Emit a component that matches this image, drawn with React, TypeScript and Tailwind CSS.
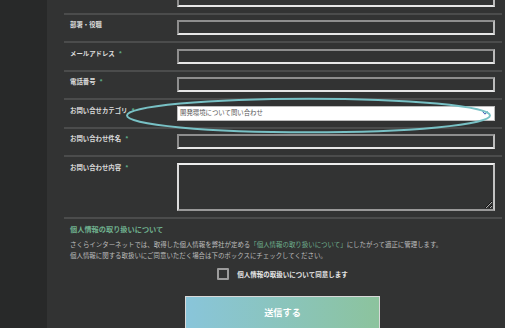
import type { ReactNode } from "react";

const FONT = { fontFamily: '"Noto Sans CJK JP", "Noto Sans", sans-serif' };

function Row({
  label,
  required,
  children,
  first,
}: {
  label?: string;
  required?: boolean;
  children: ReactNode;
  first?: boolean;
}) {
  return (
    <div
      className={
        first
          ? "flex -mt-[14px] pt-[5.5px] pb-[6px] pl-[6px] pr-[7px]"
          : "flex border-t-2 border-[#4b4c4c] pt-[5.5px] pb-[6px] pl-[6px] pr-[7px]"
      }
    >
      <div className="w-[107px] shrink-0 text-[6.4px] leading-[9px] font-bold text-[#dcdcdc]">
        {label}
        {required && <span className="ml-[4px] text-[#5fae8a]">*</span>}
      </div>
      <div className="flex-1">{children}</div>
    </div>
  );
}

function TextInput() {
  return (
    <div className="h-[15px] border-2 border-t-[#8e8e8e] border-l-[#8e8e8e] border-b-[#e6e6e6] border-r-[#bcbcbc]" />
  );
}

export default function App() {
  return (
    <div className="relative flex h-[328px] w-[505px] overflow-hidden bg-[#323333]" style={FONT}>
      {/* Sidebar */}
      <div className="w-[47px] shrink-0 bg-[#282929]" />

      {/* Form */}
      <div className="flex-1 pl-[17px] pr-[3px]">
        <Row first>
          <TextInput />
        </Row>
        <Row label="部署・役職">
          <TextInput />
        </Row>
        <Row label="メールアドレス" required>
          <TextInput />
        </Row>
        <Row label="電話番号" required>
          <TextInput />
        </Row>
        <Row label="お問い合せカテゴリ" required>
          <div className="flex h-[15px] items-center justify-between border border-[#bdbdbd] bg-white pl-[2px] pr-[6px] text-[6.4px] text-[#555]">
            <span>開発環境について問い合わせ</span>
            <svg width="6" height="4" viewBox="0 0 6 4" fill="none">
              <path d="M0.5 0.5L3 3.2L5.5 0.5" stroke="#3b5bb5" strokeWidth="1" />
            </svg>
          </div>
        </Row>
        <Row label="お問い合わせ件名" required>
          <TextInput />
        </Row>
        <Row label="お問い合わせ内容" required>
          <textarea className="block h-[48.5px] w-full resize-y border-2 border-t-[#ededed] border-l-[#dcdcdc] border-b-[#999] border-r-[#c2c2c2] bg-transparent outline-none" />
        </Row>

        {/* Privacy */}
        <div className="border-t-2 border-[#4b4c4c] pt-[5px] pl-[6px] pr-[7px]">
          <h2 className="text-[7.2px] leading-[10px] font-bold text-[#6fb08e]">
            個人情報の取り扱いについて
          </h2>
          <p className="mt-[4.5px] text-[6.45px] leading-[11px] text-[#bdbdbd]">
            さくらインターネットでは、取得した個人情報を弊社が定める
            <span className="text-[#6fb08e]">「個人情報の取り扱いについて」</span>
            にしたがって適正に管理します。
            <br />
            個人情報に関する取扱いにご同意いただく場合は下のボックスにチェックしてください。
          </p>
          <label className="mt-[7.5px] flex items-center justify-center gap-[8px]">
            <span className="h-[12px] w-[12px] rounded-[1px] border-2 border-[#9c9c9c]" />
            <span className="text-[6.5px] leading-[9px] font-bold text-[#e6e6e6]">
              個人情報の取扱いについて同意します
            </span>
          </label>
          <div className="mt-[16px] flex justify-center">
            <button
              type="button"
              className="h-[36px] w-[195px] border border-[#d9d9d9] bg-gradient-to-r from-[#89c5da] to-[#8cc39d] pb-[3px] text-[9.2px] font-bold text-white"
            >
              送信する
            </button>
          </div>
        </div>
      </div>

      {/* Annotation ellipse */}
      <svg
        className="pointer-events-none absolute left-0 top-0"
        width="505"
        height="328"
        viewBox="0 0 505 328"
        fill="none"
      >
        <ellipse cx="308.5" cy="115.5" rx="181.5" ry="16.8" stroke="#78c1c5" strokeWidth="2" />
      </svg>
    </div>
  );
}
